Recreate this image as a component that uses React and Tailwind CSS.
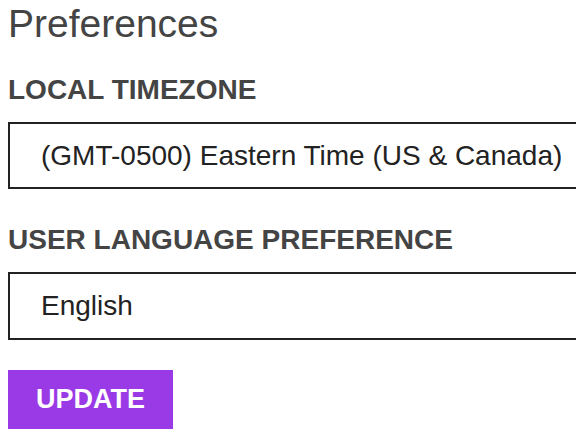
export default function App() {
  const font = { fontFamily: '"Liberation Sans", Arial, sans-serif' };

  return (
    <div className="w-[576px] h-[442px] overflow-hidden bg-white pl-[8px]" style={font}>
      <h1 className="text-[39px] leading-[48px] font-normal text-[#444444]">Preferences</h1>

      <div className="mt-[26px] text-[28px] leading-[32px] font-bold uppercase text-[#444444]">
        Local Timezone
      </div>
      <div className="mt-[16px] w-[640px] h-[67px] border-2 border-[#222222] flex items-center pl-[31px] text-[28px] text-[#222222] whitespace-nowrap">
        (GMT-0500) Eastern Time (US &amp; Canada)
      </div>

      <div className="mt-[35px] text-[28px] leading-[32px] font-bold uppercase text-[#444444]">
        User Language Preference
      </div>
      <div className="mt-[16px] w-[640px] h-[68px] border-2 border-[#222222] flex items-center pl-[31px] text-[28px] text-[#222222]">
        English
      </div>

      <button className="mt-[30px] w-[165px] h-[59px] bg-[#9a3ae6] text-white text-[27px] font-bold uppercase flex items-center justify-center">
        Update
      </button>
    </div>
  );
}
